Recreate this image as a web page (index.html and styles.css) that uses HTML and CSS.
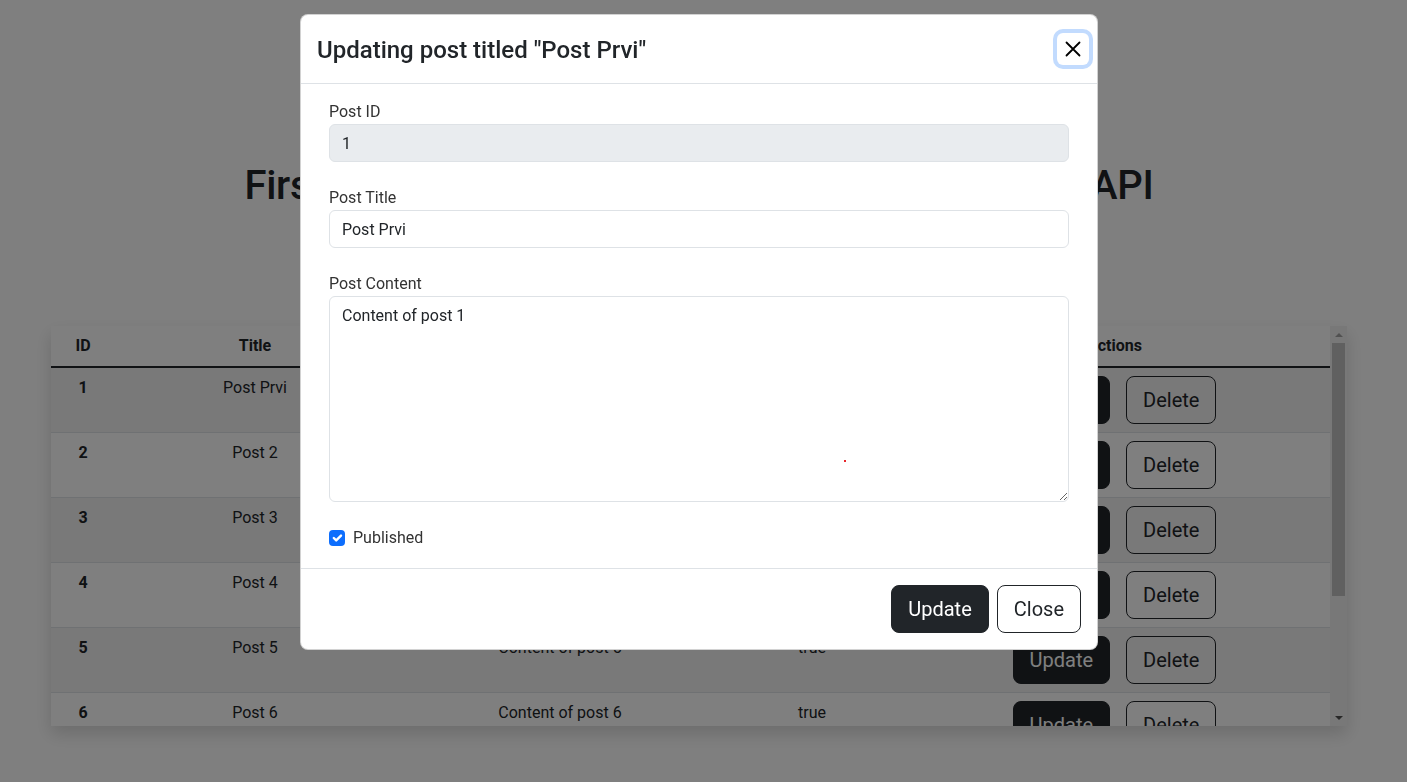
FILE: index.html
```html
<!DOCTYPE html>
<html lang="en">
<head>
<meta charset="utf-8">
<title>Posts</title>
<link rel="stylesheet" href="styles.css">
</head>
<body>
<div class="page">
  <h1 class="page-title">First CRUD Web App with Spring Boot and REST API</h1>
  <div class="table-card">
    <div class="table-viewport">
      <table class="posts">
        <colgroup>
          <col class="col-id"><col class="col-title"><col class="col-content"><col class="col-pub"><col class="col-actions">
        </colgroup>
        <thead>
          <tr><th>ID</th><th>Title</th><th>Content</th><th>Published</th><th>Actions</th></tr>
        </thead>
        <tbody>
          <tr class="odd"><th>1</th><td>Post Prvi</td><td>Content of post 1</td><td>true</td><td><div class="actions"><button class="btn btn-lg btn-dark">Update</button><button class="btn btn-lg btn-outline">Delete</button></div></td></tr>
          <tr><th>2</th><td>Post 2</td><td>Content of post 2</td><td>true</td><td><div class="actions"><button class="btn btn-lg btn-dark">Update</button><button class="btn btn-lg btn-outline">Delete</button></div></td></tr>
          <tr class="odd"><th>3</th><td>Post 3</td><td>Content of post 3</td><td>true</td><td><div class="actions"><button class="btn btn-lg btn-dark">Update</button><button class="btn btn-lg btn-outline">Delete</button></div></td></tr>
          <tr><th>4</th><td>Post 4</td><td>Content of post 4</td><td>true</td><td><div class="actions"><button class="btn btn-lg btn-dark">Update</button><button class="btn btn-lg btn-outline">Delete</button></div></td></tr>
          <tr class="odd"><th>5</th><td>Post 5</td><td>Content of post 5</td><td>true</td><td><div class="actions"><button class="btn btn-lg btn-dark">Update</button><button class="btn btn-lg btn-outline">Delete</button></div></td></tr>
          <tr><th>6</th><td>Post 6</td><td>Content of post 6</td><td>true</td><td><div class="actions"><button class="btn btn-lg btn-dark">Update</button><button class="btn btn-lg btn-outline">Delete</button></div></td></tr>
          <tr class="odd"><th>7</th><td>Post 7</td><td>Content of post 7</td><td>true</td><td><div class="actions"><button class="btn btn-lg btn-dark">Update</button><button class="btn btn-lg btn-outline">Delete</button></div></td></tr>
          <tr><th>8</th><td>Post 8</td><td>Content of post 8</td><td>true</td><td><div class="actions"><button class="btn btn-lg btn-dark">Update</button><button class="btn btn-lg btn-outline">Delete</button></div></td></tr>
        </tbody>
      </table>
    </div>
    <div class="vscroll">
      <div class="vs-btn vs-up"></div>
      <div class="vs-track"><div class="vs-thumb"></div></div>
      <div class="vs-btn vs-down"></div>
    </div>
  </div>
</div>

<div class="backdrop"></div>

<div class="modal">
  <div class="modal-dialog">
    <div class="modal-content">
      <div class="modal-header">
        <h5 class="modal-title">Updating post titled "Post Prvi"</h5>
        <button class="btn-close" aria-label="Close">
          <svg width="16" height="16" viewBox="0 0 16 16"><path d="M1.5 1.5 L14.5 14.5 M14.5 1.5 L1.5 14.5" stroke="#000" stroke-width="1.8" stroke-linecap="round" fill="none"/></svg>
        </button>
      </div>
      <div class="modal-body">
        <form class="post-form">
          <div class="field">
            <label class="form-label">Post ID</label>
            <input class="form-control" type="text" value="1" disabled>
          </div>
          <div class="field">
            <label class="form-label">Post Title</label>
            <input class="form-control" type="text" value="Post Prvi">
          </div>
          <div class="field">
            <label class="form-label">Post Content</label>
            <div class="textarea-wrap">
              <textarea class="form-control textarea">Content of post 1</textarea>
              <span class="stray-dot"></span>
            </div>
          </div>
          <label class="form-check">
            <span class="check-box"><svg width="16" height="16" viewBox="0 0 20 20"><path d="M6 10l3 3l6-6" fill="none" stroke="#fff" stroke-width="3" stroke-linecap="round" stroke-linejoin="round"/></svg></span>
            <span class="check-label">Published</span>
          </label>
        </form>
      </div>
      <div class="modal-footer">
        <button class="btn btn-lg btn-dark">Update</button>
        <button class="btn btn-lg btn-outline btn-white">Close</button>
      </div>
    </div>
  </div>
</div>
</body>
</html>
```
FILE: styles.css
```css
* { box-sizing: border-box; }

html, body {
  margin: 0;
  padding: 0;
  height: 100%;
}

body {
  font-family: Roboto, "Liberation Sans", Arial, sans-serif;
  font-size: 16px;
  line-height: 1.5;
  color: #212529;
  background: #fff;
  overflow: hidden;
}

.page {
  padding: 162px 60px 0 51px;
}

.page-title {
  margin: 0 0 116px;
  font-size: 40px;
  font-weight: 500;
  line-height: 1.2;
  letter-spacing: -0.3px;
  text-align: center;
}

.table-card {
  display: flex;
  height: 400px;
  box-shadow: 0 8px 16px rgba(0, 0, 0, 0.15);
  background: #fff;
}

.table-viewport {
  flex: 1;
  overflow: hidden;
}

.posts {
  width: 100%;
  border-collapse: collapse;
  table-layout: fixed;
  margin-bottom: 16px;
}

.col-id { width: 64px; }
.col-title { width: 280px; }
.col-content { width: 330px; }
.col-pub { width: 174px; }

.posts th,
.posts td {
  padding: 8px;
  text-align: center;
  vertical-align: top;
  border-bottom: 1px solid #dee2e6;
}

.posts thead th {
  font-weight: 700;
  border-bottom: 2px solid #212529;
}

.posts tbody th { font-weight: 700; }

.posts tr.odd th,
.posts tr.odd td {
  background: rgba(0, 0, 0, 0.05);
}

.actions {
  display: flex;
  justify-content: center;
  gap: 16px;
}

.btn {
  font-family: inherit;
  display: inline-block;
  border: 1px solid transparent;
  cursor: pointer;
}

.btn-lg {
  font-size: 20px;
  line-height: 30px;
  padding: 8px 16px;
  border-radius: 8px;
}

.btn-dark {
  background: #212529;
  border-color: #212529;
  color: #fff;
}

.btn-outline {
  background: transparent;
  border-color: #212529;
  color: #212529;
}

.btn-white { background: #fff; }

/* fake scrollbar */
.vscroll {
  width: 17px;
  background: #f1f1f1;
  display: flex;
  flex-direction: column;
}

.vs-btn {
  height: 17px;
  display: flex;
  align-items: center;
  justify-content: center;
}

.vs-up::before {
  content: "";
  border-left: 4px solid transparent;
  border-right: 4px solid transparent;
  border-bottom: 4px solid #a3a3a3;
}

.vs-down::before {
  content: "";
  border-left: 4px solid transparent;
  border-right: 4px solid transparent;
  border-top: 4px solid #505050;
}

.vs-track {
  flex: 1;
  padding: 0 2px;
}

.vs-thumb {
  height: 253px;
  background: #c1c1c1;
}

/* modal */
.backdrop {
  position: fixed;
  inset: 0;
  background: rgba(0, 0, 0, 0.5);
}

.modal {
  position: fixed;
  inset: 0;
  overflow: hidden;
}

.modal-dialog {
  width: 798px;
  margin: 14px 0 0 300px;
}

.modal-content {
  background: #fff;
  border: 1px solid rgba(0, 0, 0, 0.175);
  border-radius: 8px;
  display: flex;
  flex-direction: column;
}

.modal-header {
  display: flex;
  align-items: center;
  padding: 16px;
  border-bottom: 1px solid #dee2e6;
}

.modal-title {
  margin: 0;
  font-size: 24px;
  font-weight: 500;
  line-height: 36px;
  position: relative;
  top: 1px;
}

.btn-close {
  margin: -8px -8px -8px auto;
  width: 32px;
  height: 32px;
  padding: 8px;
  border: 0;
  border-radius: 6px;
  background: transparent;
  box-shadow: 0 0 0 4px rgba(13, 110, 253, 0.25);
  display: flex;
  align-items: center;
  justify-content: center;
}

.modal-body {
  padding: 16px;
}

.post-form {
  padding: 0 12px;
}

.field {
  margin-bottom: 24px;
}

.form-label {
  display: block;
  color: #333;
}

.form-control {
  display: block;
  width: 100%;
  height: 38px;
  padding: 6px 12px;
  font-family: inherit;
  font-size: 16px;
  line-height: 24px;
  color: #212529;
  background: #fff;
  border: 1px solid #dee2e6;
  border-radius: 6px;
  outline: none;
}

.form-control:disabled {
  background: #e9ecef;
  color: #212529;
  opacity: 1;
}

.textarea-wrap {
  position: relative;
}

.textarea {
  height: 206px;
  padding-top: 7px;
  resize: vertical;
}

.stray-dot {
  position: absolute;
  left: 515px;
  top: 164px;
  width: 2px;
  height: 2px;
  background: #e8262b;
}

.form-check {
  display: flex;
  align-items: flex-start;
  min-height: 24px;
  margin-bottom: 2px;
  color: #333;
}

.check-box {
  width: 16px;
  height: 16px;
  margin-top: 4px;
  border-radius: 4px;
  background: #0d6efd;
  display: flex;
}

.check-label {
  margin-left: 8px;
}

.modal-footer {
  display: flex;
  justify-content: flex-end;
  align-items: center;
  padding: 12px;
  border-top: 1px solid #dee2e6;
}

.modal-footer .btn {
  margin: 4px;
}
```
